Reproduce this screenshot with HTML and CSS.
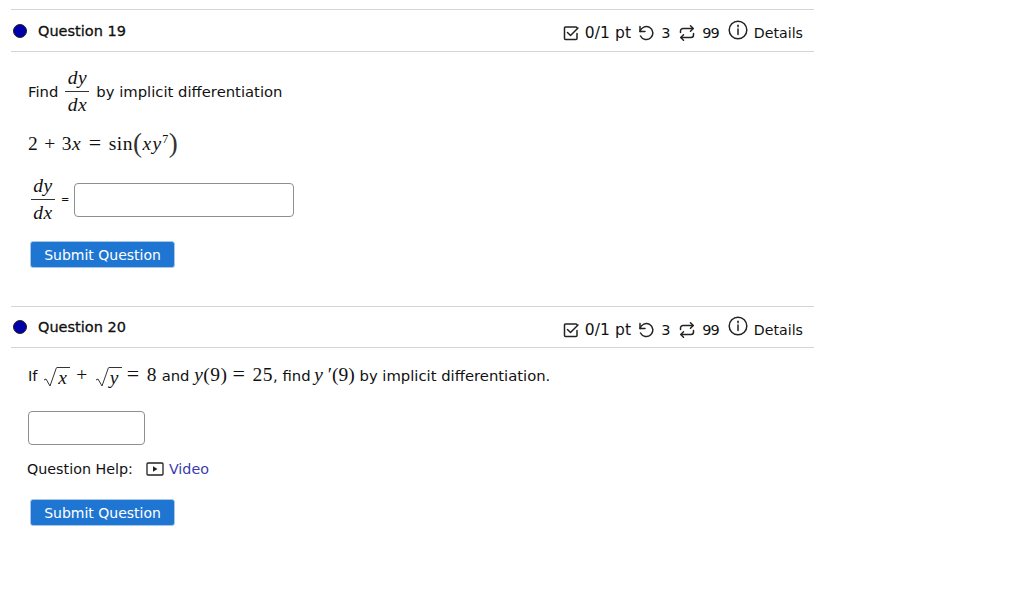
FILE: index.html
```html
<!DOCTYPE html>
<html lang="en">
<head>
    <meta charset="UTF-8">
    <title>Questions</title>
    <link rel="stylesheet" href="styles.css">
</head>
<body>
    <div class="question first">
        <div class="question-head">
            <span class="dot"></span>
            <h3>Question 19</h3>
            <div class="meta">
                <svg class="icon check" viewBox="0 0 16 16"><path d="M14 8.500V13.500a1 1 0 0 1-1 1H2.500a1 1 0 0 1-1-1V3a1 1 0 0 1 1-1H13a1 1 0 0 1 1 1"/><path d="M4.500 7.500l3 3 7.500-7.500"/></svg>
                <span class="pts">0/1 pt</span>
                <svg class="icon retry" viewBox="0 0 16 16"><path d="M2 1.500v5h5"/><path d="M2 6.500A6.500 6.500 0 1 1 2.500 11"/></svg>
                <span>3</span>
                <svg class="icon swap" viewBox="0 0 16 16"><path d="M11.500 .8l2.700 2.700-2.700 2.700"/><path d="M1.500 7.500V6a2.500 2.500 0 0 1 2.500-2.500H14"/><path d="M4.500 15.200L1.800 12.500 4.500 9.800"/><path d="M14.500 8.500V10a2.500 2.500 0 0 1-2.500 2.500H2"/></svg>
                <span class="tries">99</span>
                <svg class="icon info" viewBox="0 0 20 20"><circle cx="10" cy="10" r="8.800"/><path d="M10 9v5.500"/><path d="M10 5.200v1.600"/></svg>
                <span class="details">Details</span>
            </div>
        </div>
        <div class="question-body">
            <p class="find">Find <span class="frac"><i>dy</i><i>dx</i></span> by implicit differentiation</p>
            <p class="math equation">2<span class="op">+</span>3<i>x</i><span class="op rel">=</span>sin<span class="big">(</span><i>xy</i><sup>7</sup><span class="big">)</span></p>
            <div class="answer-row">
                <span class="frac"><i>dy</i><i>dx</i></span>
                <span class="equals">=</span>
                <input class="answer wide" type="text">
            </div>
            <button class="submit">Submit Question</button>
        </div>
    </div>

    <div class="question">
        <div class="question-head second-head">
            <span class="dot"></span>
            <h3>Question 20</h3>
            <div class="meta">
                <svg class="icon check" viewBox="0 0 16 16"><path d="M14 8.500V13.500a1 1 0 0 1-1 1H2.500a1 1 0 0 1-1-1V3a1 1 0 0 1 1-1H13a1 1 0 0 1 1 1"/><path d="M4.500 7.500l3 3 7.500-7.500"/></svg>
                <span class="pts">0/1 pt</span>
                <svg class="icon retry" viewBox="0 0 16 16"><path d="M2 1.500v5h5"/><path d="M2 6.500A6.500 6.500 0 1 1 2.500 11"/></svg>
                <span>3</span>
                <svg class="icon swap" viewBox="0 0 16 16"><path d="M11.500 .8l2.700 2.700-2.700 2.700"/><path d="M1.500 7.500V6a2.500 2.500 0 0 1 2.500-2.500H14"/><path d="M4.500 15.200L1.800 12.500 4.500 9.800"/><path d="M14.500 8.500V10a2.500 2.500 0 0 1-2.500 2.500H2"/></svg>
                <span class="tries">99</span>
                <svg class="icon info" viewBox="0 0 20 20"><circle cx="10" cy="10" r="8.800"/><path d="M10 9v5.500"/><path d="M10 5.200v1.600"/></svg>
                <span class="details">Details</span>
            </div>
        </div>
        <div class="question-body second">
            <p class="statement">If <span class="math"><span class="root"><svg class="radical" viewBox="0 0 14 21"><path d="M1 13l2-1 4 7L13.500 .5"/></svg><span class="radicand"><i>x</i></span></span><span class="op">+</span><span class="root"><svg class="radical" viewBox="0 0 14 21"><path d="M1 13l2-1 4 7L13.500 .5"/></svg><span class="radicand"><i>y</i></span></span><span class="op rel">=</span>8</span> and <span class="math"><i>y</i>(9)<span class="op rel">=</span>25</span>, find <span class="math tight"><i>y</i> ′(9)</span> by implicit differentiation.</p>
            <input class="answer narrow" type="text">
            <p class="help">Question Help:
                <svg class="video-icon" viewBox="0 0 18 14"><rect x="1" y="1" width="16" height="12" rx="1"/><path class="play" d="M7 4.200v5.600l4.500-2.800z"/></svg>
                <a href="#">Video</a>
            </p>
            <button class="submit">Submit Question</button>
        </div>
    </div>
</body>
</html>
```

FILE: styles.css
```css
body {
    margin: 0;
    padding: 9px 0 0 11px;
    width: 803px;
    font-family: "DejaVu Sans", sans-serif;
    font-size: 14.8px;
    color: #111;
    background-color: #ffffff;
}
p {
    margin: 0;
}
.question {
    margin-top: 38px;
}
.question.first {
    margin-top: 0;
}
.question-head {
    display: flex;
    align-items: center;
    height: 41px;
    border-top: 1px solid #d4d4d4;
    border-bottom: 1px solid #d4d4d4;
}
.second-head {
    height: 40px;
}
.dot {
    width: 12px;
    height: 12px;
    margin-left: 2px;
    border: 1px solid #222;
    border-radius: 50%;
    background-color: #0000aa;
}
h3 {
    margin: 0 0 0 11px;
    font-size: 14.5px;
    font-weight: 500;
    -webkit-text-stroke: 0.3px #111;
}
.meta {
    display: flex;
    align-items: center;
    margin-left: auto;
    margin-right: 11px;
    padding-top: 5px;
    gap: 7px;
    font-size: 14.5px;
}
.icon {
    width: 16px;
    height: 16px;
    fill: none;
    stroke: #222;
    stroke-width: 1.500;
    stroke-linecap: round;
    stroke-linejoin: round;
}
.check {
    margin-right: -1px;
}
.pts {
    font-size: 15.5px;
    letter-spacing: 0.1px;
}
.retry {
    margin-left: 0;
}
.swap {
    margin-left: 2px;
}
.tries {
    letter-spacing: -1px;
}
.info {
    width: 20px;
    height: 20px;
    margin-left: 2px;
    margin-top: -7px;
}
.details {
    margin-left: -1px;
    font-size: 14.2px;
}
.question-body {
    padding: 13px 0 0 17px;
}
.find {
    display: flex;
    align-items: center;
    gap: 7px;
}
.frac {
    display: inline-flex;
    flex-direction: column;
    align-items: center;
    width: 24px;
    font-family: "Liberation Serif", serif;
    font-size: 19.5px;
    line-height: 26px;
    letter-spacing: 0.5px;
}
.frac i:first-child {
    border-bottom: 1px solid #333;
    width: 100%;
    text-align: center;
}
.math {
    font-family: "Liberation Serif", serif;
    font-size: 19.5px;
    letter-spacing: 0.5px;
}
.tight {
    letter-spacing: 0;
    margin-left: -1px;
}
.op {
    margin: 0 6px;
}
.rel {
    margin: 0 7px;
    font-size: 22px;
}
.statement .rel {
    margin-left: 5px;
}
.equation {
    margin-top: 8px;
    height: 34px;
    line-height: 34px;
}
.equation i {
    letter-spacing: 1.2px;
}
.big {
    font-size: 27px;
    color: #333;
    vertical-align: -2px;
}
sup {
    font-size: 12px;
    line-height: 0;
}
.answer-row {
    display: flex;
    align-items: center;
    gap: 5px;
    margin-top: 13px;
    margin-left: 3px;
}
.equals {
    margin-left: 1px;
    font-size: 10px;
}
.answer {
    box-sizing: border-box;
    height: 34px;
    border: 1px solid #8f8f8f;
    border-radius: 4px;
    background-color: #fff;
}
.wide {
    width: 220px;
}
.narrow {
    display: block;
    width: 117px;
    margin-top: 20px;
}
.submit {
    display: block;
    width: 145px;
    height: 27px;
    margin: 15px 0 0 2px;
    padding: 0;
    font-family: inherit;
    font-size: 14px;
    color: #fff;
    background-color: #1f76d2;
    border: 1px solid #a9c8e8;
    border-radius: 3px;
}
.second {
    padding-top: 11px;
}
.statement {
    height: 32px;
    line-height: 30px;
}
.root {
    display: inline-flex;
    align-items: flex-start;
    vertical-align: -7px;
    margin-left: 1px;
}
.radical {
    width: 14px;
    height: 21px;
    fill: none;
    stroke: #333;
    stroke-width: 1;
}
.radicand {
    height: 20px;
    line-height: 20px;
    min-width: 11px;
    padding: 0 1px;
    border-top: 1px solid #333;
}
.help {
    display: flex;
    align-items: center;
    height: 20px;
    gap: 5px;
    margin-top: 14px;
    margin-left: -1px;
    font-size: 14.3px;
}
.video-icon {
    width: 18px;
    height: 14px;
    margin-left: 8px;
    fill: none;
    stroke: #222;
    stroke-width: 1.300;
}
.play {
    fill: #222;
    stroke: none;
}
a {
    color: #3a3ab0;
    text-decoration: none;
}
.help + .submit {
    margin-top: 20px;
}
```
